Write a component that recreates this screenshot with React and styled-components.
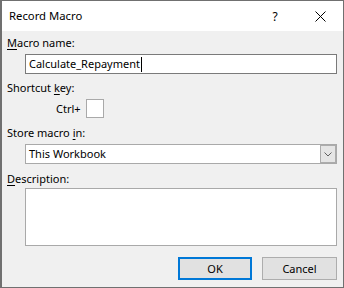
import React from "react";
import styled, { createGlobalStyle } from "styled-components";

const GlobalStyle = createGlobalStyle`
  html, body {
    margin: 0;
    padding: 0;
    background: #ffffff;
  }
  body {
    font-family: "Noto Sans", "Liberation Sans", sans-serif;
    font-size: 11px;
    color: #000;
  }
`;

const Dialog = styled.div`
  width: 344px;
  height: 288px;
  box-sizing: border-box;
  border: 1px solid #707070;
  border-left-width: 2px;
  background: #f0f0f0;
  display: flex;
  flex-direction: column;
`;

const TitleBar = styled.div`
  height: 30px;
  background: #ffffff;
  display: flex;
  align-items: center;
  padding-left: 7px;
`;

const Title = styled.div`
  flex: 1;
  font-size: 11.3px;
  line-height: 16px;
`;

const TitleButton = styled.div`
  width: ${(p) => p.$w}px;
  height: 30px;
  display: flex;
  align-items: center;
  justify-content: center;
  font-size: 12px;
  color: #000;
`;

const Body = styled.div`
  flex: 1;
  display: flex;
  flex-direction: column;
  padding: 4px 6px 0 5px;
`;

const Label = styled.div`
  line-height: 16px;
  height: 16px;
  margin-top: ${(p) => p.$top || 0}px;
  white-space: nowrap;
`;

const Key = styled.span`
  text-decoration: underline;
  text-underline-offset: 2px;
`;

const Field = styled.div`
  margin-left: 18px;
  margin-top: ${(p) => p.$top || 3}px;
  height: ${(p) => p.$h || 20}px;
  box-sizing: border-box;
  background: #fff;
  border: 1px solid ${(p) => (p.$focus ? "#7a7a7a" : "#a9a9a9")};
  display: flex;
  align-items: center;
  padding-left: 3px;
  line-height: 16px;
`;

const Caret = styled.span`
  display: inline-block;
  width: 1px;
  height: 15px;
  background: #000;
  margin-left: 1px;
`;

const KeyRow = styled.div`
  margin-top: 3px;
  display: flex;
  align-items: center;
  padding-left: 49px;
  gap: 5px;
`;

const KeyBox = styled.div`
  width: 18px;
  height: 19px;
  box-sizing: border-box;
  background: #fff;
  border: 1px solid #a9a9a9;
`;

const Select = styled(Field)`
  padding-right: 0;
  justify-content: space-between;
`;

const DropButton = styled.div`
  width: 16px;
  height: 18px;
  box-sizing: border-box;
  background: #e5e5e5;
  border: 1px solid #acacac;
  display: flex;
  align-items: center;
  justify-content: center;
`;

const ButtonRow = styled.div`
  margin-top: 11px;
  display: flex;
  justify-content: flex-end;
  gap: 10px;
`;

const Button = styled.div`
  width: ${(p) => p.$w}px;
  height: 23px;
  box-sizing: border-box;
  background: #e1e1e1;
  border: ${(p) => (p.$default ? "2px solid #0078d7" : "1px solid #adadad")};
  display: flex;
  align-items: center;
  justify-content: center;
`;

export default function App() {
  return (
    <>
      <GlobalStyle />
      <Dialog>
        <TitleBar>
          <Title>Record Macro</Title>
          <TitleButton $w={44}>?</TitleButton>
          <TitleButton $w={46}>
            <svg width="11" height="11" viewBox="0 0 11 11">
              <path d="M0.5 0.5 L10.5 10.5 M10.5 0.5 L0.5 10.5" stroke="#000" strokeWidth="1" />
            </svg>
          </TitleButton>
        </TitleBar>
        <Body>
          <Label>
            <Key>M</Key>acro name:
          </Label>
          <Field $focus>
            Calculate_Repayment
            <Caret />
          </Field>
          <Label $top={6}>
            Shortcut <Key>k</Key>ey:
          </Label>
          <KeyRow>
            <span>Ctrl+</span>
            <KeyBox />
          </KeyRow>
          <Label $top={7}>
            Store macro <Key>i</Key>n:
          </Label>
          <Select>
            This Workbook
            <DropButton>
              <svg width="8" height="5" viewBox="0 0 8 5">
                <path d="M0.5 0.5 L4 4 L7.5 0.5" stroke="#606060" fill="none" strokeWidth="1" />
              </svg>
            </DropButton>
          </Select>
          <Label $top={7}>
            <Key>D</Key>escription:
          </Label>
          <Field $top={1} $h={58} />
          <ButtonRow>
            <Button $default $w={74}>OK</Button>
            <Button $w={75}>Cancel</Button>
          </ButtonRow>
        </Body>
      </Dialog>
    </>
  );
}
